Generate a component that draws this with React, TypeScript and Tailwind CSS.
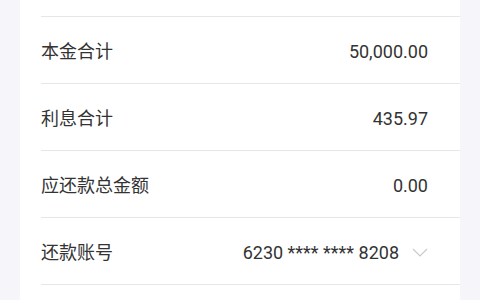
const rows = [
  { label: '本金合计', value: '50,000.00' },
  { label: '利息合计', value: '435.97' },
  { label: '应还款总金额', value: '0.00' },
  { label: '还款账号', value: '6230 **** **** 8208', select: true },
];

export default function App() {
  return (
    <div
      className="h-[300px] overflow-hidden bg-[#f6f6fa] px-[20px]"
      style={{ fontFamily: 'Roboto, "Noto Sans CJK SC", sans-serif' }}
    >
      <div className="h-full bg-white pl-[21px]">
        <div className="h-[17px] border-b border-[#e6e6e9]" />
        {rows.map((row) => (
          <div
            key={row.label}
            className="flex h-[67px] items-center justify-between border-b border-[#e6e6e9] pt-[3px] pr-[32px] text-[18px] text-[#333333]"
          >
            <span>{row.label}</span>
            <div className="flex items-center">
              <span>{row.value}</span>
              {row.select && (
                <svg width="16" height="9" viewBox="0 0 16 9" className="ml-[13px]" fill="none">
                  <path d="M1 1l7 7 7-7" stroke="#c9c9cc" strokeWidth="1.2" />
                </svg>
              )}
            </div>
          </div>
        ))}
      </div>
    </div>
  );
}
